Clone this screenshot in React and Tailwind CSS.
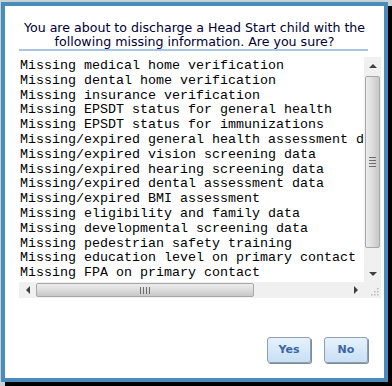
import React from 'react';

const lines = [
  'Missing medical home verification',
  'Missing dental home verification',
  'Missing insurance verification',
  'Missing EPSDT status for general health',
  'Missing EPSDT status for immunizations',
  'Missing/expired general health assessment data',
  'Missing/expired vision screening data',
  'Missing/expired hearing screening data',
  'Missing/expired dental assessment data',
  'Missing/expired BMI assessment',
  'Missing eligibility and family data',
  'Missing developmental screening data',
  'Missing pedestrian safety training',
  'Missing education level on primary contact',
  'Missing FPA on primary contact',
];

const Arrow = ({ dir }) => {
  const pts = {
    up: '0,4 4,0 8,4',
    down: '0,0 8,0 4,4',
    left: '4,0 4,8 0,4',
    right: '0,0 4,4 0,8',
  }[dir];
  const vert = dir === 'up' || dir === 'down';
  return (
    <svg width={vert ? 8 : 4} height={vert ? 4 : 8} viewBox={vert ? '0 0 8 4' : '0 0 4 8'}>
      <polygon points={pts} fill="#404040" />
    </svg>
  );
};

const DialogButton = ({ label }) => (
  <button className="w-[44px] h-[26px] rounded-[3px] border border-[#8e9fb4] bg-gradient-to-b from-[#e6f2fd] to-[#c8dff4] shadow-[1px_1px_0_#7d8a99] text-[11px] font-bold text-[#3a67a0] font-['DejaVu_Sans',sans-serif]">
    {label}
  </button>
);

export default function App() {
  return (
    <div className="w-[392px] h-[386px] bg-[#c9d1d8] pt-[2px] pl-[1px] overflow-hidden">
      <div className="w-[387px] h-[380px] border-4 border-[#4a8cb9] bg-white shadow-[4px_4px_0_#000] flex flex-col">
        {/* Title */}
        <div className="pt-[15px] text-center text-[12.6px] leading-[14px] text-[#000033] font-['DejaVu_Sans',sans-serif]">
          <div>You are about to discharge a Head Start child with the</div>
          <div>following missing information. Are you sure?</div>
        </div>
        <div className="ml-[14px] w-[349px] h-[2px] bg-[#a9c5e2]" />

        {/* Fake textarea */}
        <div className="ml-[14px] mt-[6px] w-[362px] h-[241px] flex flex-col">
          <div className="flex h-[225px]">
            <div className="flex-1 overflow-hidden pt-[2px] pl-[1px] whitespace-pre text-[13.33px] leading-[14.8px] text-black font-['Liberation_Mono',monospace]">
              {lines.map((l) => (
                <div key={l}>{l}</div>
              ))}
            </div>
            {/* vertical scrollbar */}
            <div className="w-[17px] flex flex-col bg-[#f0f0f0]">
              <div className="h-[17px] flex items-center justify-center">
                <Arrow dir="up" />
              </div>
              <div className="mt-[2px] mx-[1px] h-[172px] rounded-[2px] border border-[#a8a8a8] bg-gradient-to-r from-[#ececec] via-[#dcdcdc] to-[#c8c8c8] flex flex-col items-center justify-center gap-[2px]">
                <div className="w-[7px] h-[1px] bg-[#6b6b6b]" />
                <div className="w-[7px] h-[1px] bg-[#6b6b6b]" />
                <div className="w-[7px] h-[1px] bg-[#6b6b6b]" />
                <div className="w-[7px] h-[1px] bg-[#6b6b6b]" />
              </div>
              <div className="flex-1" />
              <div className="h-[17px] flex items-center justify-center">
                <Arrow dir="down" />
              </div>
            </div>
          </div>
          {/* horizontal scrollbar */}
          <div className="flex h-[16px] bg-[#f0f0f0]">
            <div className="w-[17px] flex items-center justify-center">
              <Arrow dir="left" />
            </div>
            <div className="my-[1px] w-[218px] rounded-[2px] border border-[#a8a8a8] bg-gradient-to-b from-[#ececec] via-[#dcdcdc] to-[#c8c8c8] flex items-center justify-center gap-[2px]">
              <div className="w-[1px] h-[7px] bg-[#6b6b6b]" />
              <div className="w-[1px] h-[7px] bg-[#6b6b6b]" />
              <div className="w-[1px] h-[7px] bg-[#6b6b6b]" />
              <div className="w-[1px] h-[7px] bg-[#6b6b6b]" />
            </div>
            <div className="flex-1" />
            <div className="w-[17px] flex items-center justify-center">
              <Arrow dir="right" />
            </div>
            <div className="w-[17px] bg-[#f0f0f0] flex items-end justify-end p-[2px]">
              <svg width="9" height="9" viewBox="0 0 9 9">
                <rect x="7" y="1" width="1.5" height="1.5" fill="#b8b8b8" />
                <rect x="4" y="4" width="1.5" height="1.5" fill="#b8b8b8" />
                <rect x="7" y="4" width="1.5" height="1.5" fill="#b8b8b8" />
                <rect x="1" y="7" width="1.5" height="1.5" fill="#b8b8b8" />
                <rect x="4" y="7" width="1.5" height="1.5" fill="#b8b8b8" />
                <rect x="7" y="7" width="1.5" height="1.5" fill="#b8b8b8" />
              </svg>
            </div>
          </div>
        </div>

        {/* Buttons */}
        <div className="mt-[39px] mr-[16px] flex justify-end gap-[13px]">
          <DialogButton label="Yes" />
          <DialogButton label="No" />
        </div>
      </div>
    </div>
  );
}
